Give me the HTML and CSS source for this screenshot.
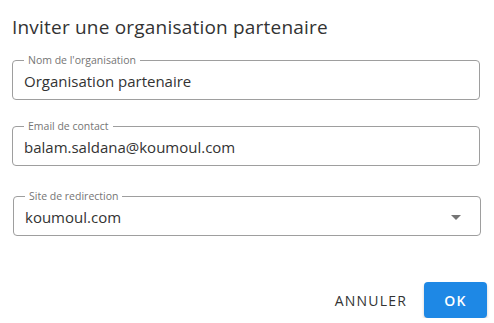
FILE: index.html
```html
<!DOCTYPE html>
<html lang="fr">
<head>
    <meta charset="UTF-8">
    <meta name="viewport" content="width=device-width, initial-scale=1.0">
    <link rel="stylesheet" href="styles.css">
    <title>Inviter une organisation partenaire</title>
</head>
<body>
    <div class="dialog">
        <h2 class="title">Inviter une organisation partenaire</h2>
        <div class="field field-name">
            <label>Nom de l'organisation</label>
            <span class="value">Organisation partenaire</span>
        </div>
        <div class="field field-email">
            <label>Email de contact</label>
            <span class="value">balam.saldana@koumoul.com</span>
        </div>
        <div class="field field-site">
            <label>Site de redirection</label>
            <span class="value">koumoul.com</span>
            <svg class="arrow" width="10" height="5" viewBox="0 0 10 5"><path d="M0 0h10L5 5z" fill="#757575"/></svg>
        </div>
        <div class="actions">
            <button class="btn btn-text">Annuler</button>
            <button class="btn btn-primary">OK</button>
        </div>
    </div>
</body>
</html>
```
FILE: styles.css
```css
* {
    margin: 0;
    padding: 0;
    box-sizing: border-box;
}
body {
    background: #fff;
    font-family: "Open Sans", "Noto Sans", sans-serif;
    color: #333;
}
.dialog {
    padding: 14px 14px 0 12px;
}
.title {
    font-size: 19px;
    font-weight: 400;
    letter-spacing: 0.2px;
    line-height: 26px;
    color: #333;
    margin-bottom: 20px;
}
.field {
    position: relative;
    height: 40px;
    border: 1px solid #9e9e9e;
    border-radius: 4px;
    display: flex;
    align-items: center;
    padding: 2px 11px 0 11px;
}
.field label {
    position: absolute;
    top: -8px;
    left: 11px;
    padding: 0 4px 0 4px;
    background: #fff;
    font-size: 10.5px;
    line-height: 14px;
    color: #757575;
}
.field .value {
    font-size: 15px;
    color: #333;
    flex: 1;
}
.field-name {
    margin-bottom: 26px;
}
.field-email {
    margin-bottom: 30px;
}
.field-site {
    margin-left: 1px;
    margin-right: -1px;
}
.arrow {
    margin-right: 8px;
}
.actions {
    display: flex;
    justify-content: flex-end;
    align-items: center;
    gap: 9px;
    margin-top: 46px;
    margin-right: -7px;
}
.btn {
    font-family: inherit;
    font-size: 14px;
    letter-spacing: 1.2px;
    text-transform: uppercase;
    border: none;
    border-radius: 4px;
    height: 36px;
    cursor: pointer;
}
.btn-text {
    background: none;
    color: #333;
    padding: 0 8px;
}
.btn-primary {
    background: #1e88e5;
    color: #fff;
    font-weight: 600;
    width: 63px;
    box-shadow: 0 2px 3px rgba(0, 0, 0, 0.2);
}
```
